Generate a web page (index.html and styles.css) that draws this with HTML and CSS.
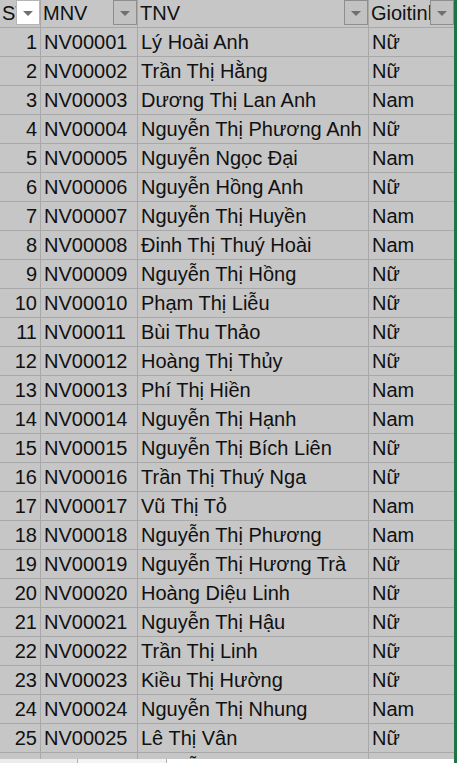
FILE: index.html
```html
<!DOCTYPE html>
<html lang="vi">
<head>
<meta charset="utf-8">
<link rel="stylesheet" href="styles.css">
</head>
<body>
<div class="sheet">
  <div class="table">
    <div class="row head">
      <div class="cell a"><span class="txt">STT</span><span class="dd dd-active"><i></i></span></div>
      <div class="cell b"><span class="txt">MNV</span><span class="dd"><i></i></span></div>
      <div class="cell c"><span class="txt">TNV</span><span class="dd"><i></i></span></div>
      <div class="cell d"><span class="txt">Gioitinh</span><span class="dd"><i></i></span></div>
    </div>
    <div class="row"><div class="cell a num">1</div><div class="cell b">NV00001</div><div class="cell c">Lý Hoài Anh</div><div class="cell d">Nữ</div></div>
    <div class="row"><div class="cell a num">2</div><div class="cell b">NV00002</div><div class="cell c">Trần Thị Hằng</div><div class="cell d">Nữ</div></div>
    <div class="row"><div class="cell a num">3</div><div class="cell b">NV00003</div><div class="cell c">Dương Thị Lan Anh</div><div class="cell d">Nam</div></div>
    <div class="row"><div class="cell a num">4</div><div class="cell b">NV00004</div><div class="cell c">Nguyễn Thị Phương Anh</div><div class="cell d">Nữ</div></div>
    <div class="row"><div class="cell a num">5</div><div class="cell b">NV00005</div><div class="cell c">Nguyễn Ngọc Đại</div><div class="cell d">Nam</div></div>
    <div class="row"><div class="cell a num">6</div><div class="cell b">NV00006</div><div class="cell c">Nguyễn Hồng Anh</div><div class="cell d">Nữ</div></div>
    <div class="row"><div class="cell a num">7</div><div class="cell b">NV00007</div><div class="cell c">Nguyễn Thị Huyền</div><div class="cell d">Nam</div></div>
    <div class="row"><div class="cell a num">8</div><div class="cell b">NV00008</div><div class="cell c">Đinh Thị Thuý Hoài</div><div class="cell d">Nam</div></div>
    <div class="row"><div class="cell a num">9</div><div class="cell b">NV00009</div><div class="cell c">Nguyễn Thị Hồng</div><div class="cell d">Nữ</div></div>
    <div class="row"><div class="cell a num">10</div><div class="cell b">NV00010</div><div class="cell c">Phạm Thị Liễu</div><div class="cell d">Nữ</div></div>
    <div class="row"><div class="cell a num">11</div><div class="cell b">NV00011</div><div class="cell c">Bùi Thu Thảo</div><div class="cell d">Nữ</div></div>
    <div class="row"><div class="cell a num">12</div><div class="cell b">NV00012</div><div class="cell c">Hoàng Thị Thủy</div><div class="cell d">Nữ</div></div>
    <div class="row"><div class="cell a num">13</div><div class="cell b">NV00013</div><div class="cell c">Phí Thị Hiền</div><div class="cell d">Nam</div></div>
    <div class="row"><div class="cell a num">14</div><div class="cell b">NV00014</div><div class="cell c">Nguyễn Thị Hạnh</div><div class="cell d">Nam</div></div>
    <div class="row"><div class="cell a num">15</div><div class="cell b">NV00015</div><div class="cell c">Nguyễn Thị Bích Liên</div><div class="cell d">Nữ</div></div>
    <div class="row"><div class="cell a num">16</div><div class="cell b">NV00016</div><div class="cell c">Trần Thị Thuý Nga</div><div class="cell d">Nữ</div></div>
    <div class="row"><div class="cell a num">17</div><div class="cell b">NV00017</div><div class="cell c">Vũ Thị Tỏ</div><div class="cell d">Nam</div></div>
    <div class="row"><div class="cell a num">18</div><div class="cell b">NV00018</div><div class="cell c">Nguyễn Thị Phương</div><div class="cell d">Nam</div></div>
    <div class="row"><div class="cell a num">19</div><div class="cell b">NV00019</div><div class="cell c">Nguyễn Thị Hương Trà</div><div class="cell d">Nữ</div></div>
    <div class="row"><div class="cell a num">20</div><div class="cell b">NV00020</div><div class="cell c">Hoàng Diệu Linh</div><div class="cell d">Nữ</div></div>
    <div class="row"><div class="cell a num">21</div><div class="cell b">NV00021</div><div class="cell c">Nguyễn Thị Hậu</div><div class="cell d">Nữ</div></div>
    <div class="row"><div class="cell a num">22</div><div class="cell b">NV00022</div><div class="cell c">Trần Thị Linh</div><div class="cell d">Nữ</div></div>
    <div class="row"><div class="cell a num">23</div><div class="cell b">NV00023</div><div class="cell c">Kiều Thị Hường</div><div class="cell d">Nữ</div></div>
    <div class="row"><div class="cell a num">24</div><div class="cell b">NV00024</div><div class="cell c">Nguyễn Thị Nhung</div><div class="cell d">Nam</div></div>
    <div class="row"><div class="cell a num">25</div><div class="cell b">NV00025</div><div class="cell c">Lê Thị Vân</div><div class="cell d">Nữ</div></div>
    <div class="row"><div class="cell a num">26</div><div class="cell b">NV00026</div><div class="cell c">Nguyễn Thị Thuý Trang</div><div class="cell d">Nam</div></div>
  </div>
  <div class="tabs">
    <span class="tab t1"></span><span class="tab t2"></span><span class="tab t3"></span>
  </div>
</div>
</body>
</html>
```

FILE: styles.css
```css
html, body {
  margin: 0;
  padding: 0;
  background: #c6c6c6;
}
.sheet {
  position: relative;
  width: 457px;
  height: 763px;
  overflow: hidden;
  background: #c6c6c6;
  font-family: "Liberation Sans", Arial, sans-serif;
  font-size: 20px;
  color: #111;
  border-right: 3px solid #217346;
  box-sizing: border-box;
}
.table {
  display: flex;
  flex-direction: column;
}
.row {
  display: flex;
  height: 29px;
  box-sizing: border-box;
  border-bottom: 1px solid #a8a8a8;
}
.row.head {
  height: 28px;
}
.cell {
  position: relative;
  box-sizing: border-box;
  border-right: 1px solid #a8a8a8;
  padding: 0 2px 2px 3px;
  display: flex;
  align-items: flex-end;
  white-space: nowrap;
  overflow: hidden;
  line-height: 24px;
}
.a { width: 41px; }
.b { width: 97px; }
.c { width: 231px; }
.d { width: 85px; border-right: 0; }
.num {
  justify-content: flex-end;
  padding-right: 3px;
}
.head .cell {
  padding-left: 2px;
}
.dd {
  position: absolute;
  top: 0;
  right: 0;
  width: 24px;
  height: 25px;
  box-sizing: border-box;
  border: 1px solid #8e8e8e;
  background: #c2c2c2;
  display: flex;
  align-items: center;
  justify-content: center;
}
.dd-active {
  background: #ffffff;
  border-color: #b5b5b5;
}
.dd i {
  width: 0;
  height: 0;
  border-left: 5px solid transparent;
  border-right: 5px solid transparent;
  border-top: 5px solid #6f6f6f;
  margin-top: 1px;
}
.tabs {
  position: absolute;
  left: 0;
  bottom: 0;
  width: 100%;
  height: 4px;
  display: flex;
}
.tab {
  height: 4px;
  box-sizing: border-box;
}
.t1 { width: 78px; background: #ececec; border-right: 1px solid #b0b0b0; }
.t2 { width: 89px; background: #f4f4f4; border-right: 1px solid #b0b0b0; }
.t3 { flex: 1; background: #ffffff; }
```
